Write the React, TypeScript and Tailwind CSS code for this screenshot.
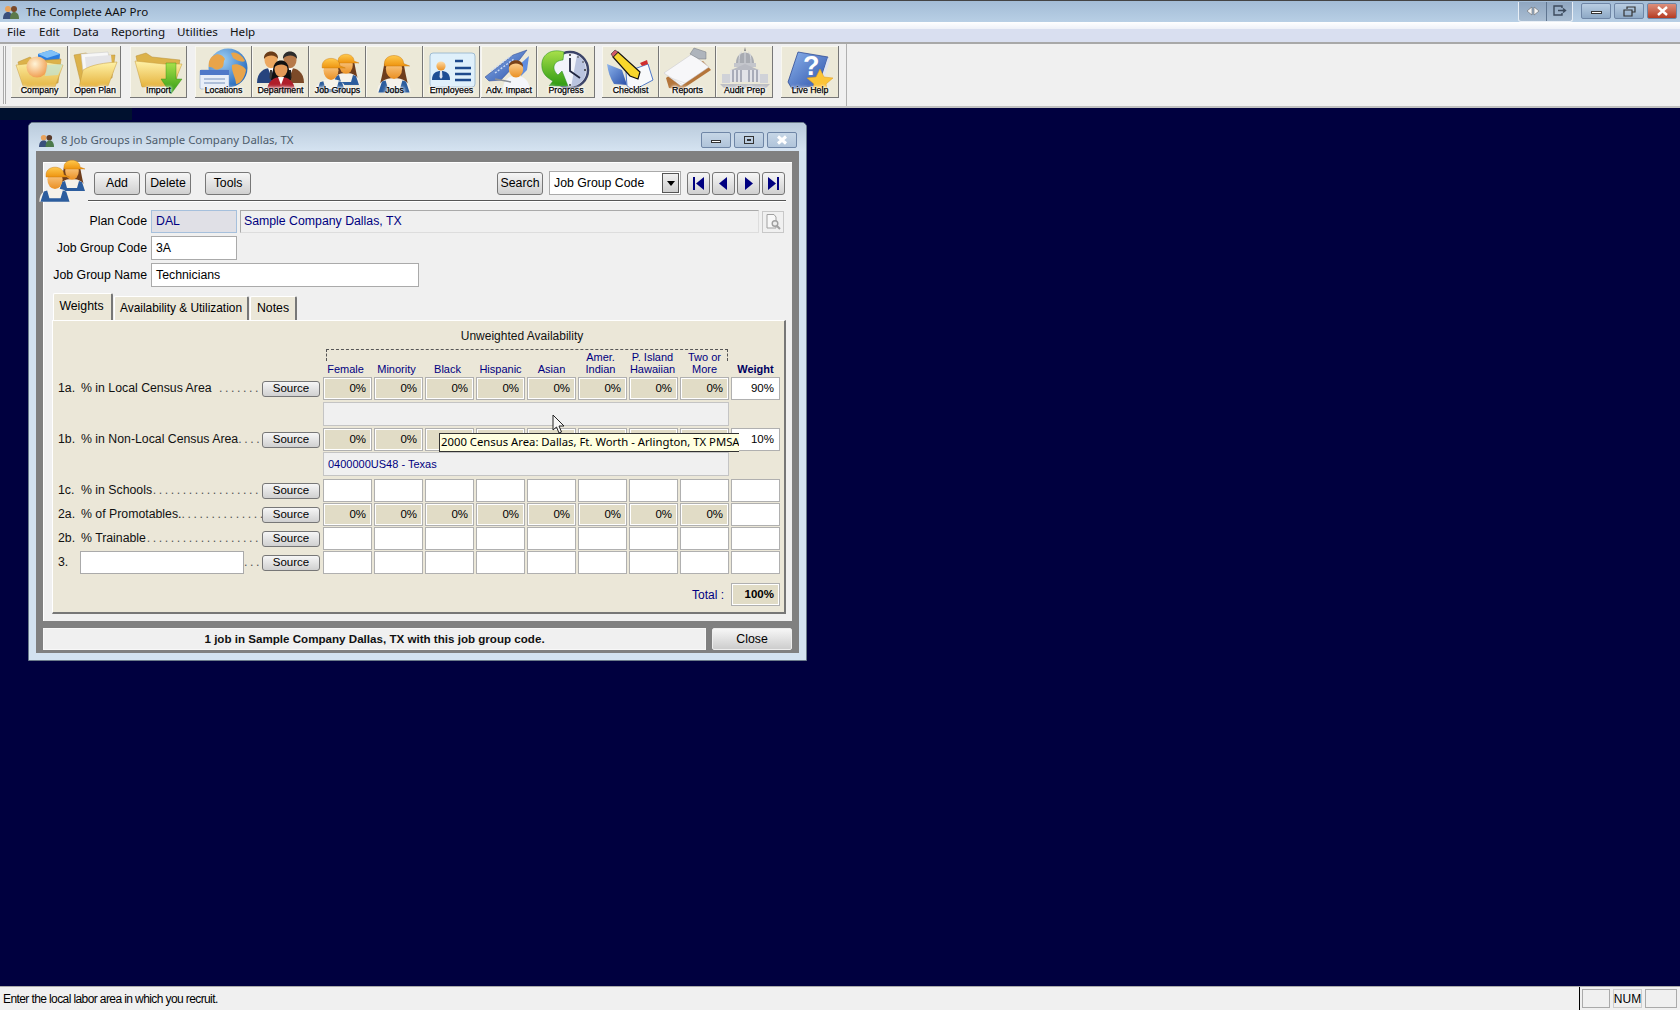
import { FC, ReactNode } from 'react';

const Defs: FC = () => (
    <svg className="absolute h-0 w-0">
        <defs>
            <linearGradient id="fold" x1="0" y1="0" x2="0" y2="1">
                <stop offset="0" stopColor="#fff2a8" />
                <stop offset="1" stopColor="#e5b23c" />
            </linearGradient>
            <linearGradient id="skin" x1="0" y1="0" x2="0" y2="1">
                <stop offset="0" stopColor="#ffdca6" />
                <stop offset="1" stopColor="#ea8f22" />
            </linearGradient>
            <linearGradient id="hat" x1="0" y1="0" x2="0" y2="1">
                <stop offset="0" stopColor="#ffc94d" />
                <stop offset="1" stopColor="#ee9410" />
            </linearGradient>
            <radialGradient id="globe" cx="0.35" cy="0.3" r="0.8">
                <stop offset="0" stopColor="#9fd0f5" />
                <stop offset="1" stopColor="#1d62b8" />
            </radialGradient>
            <linearGradient id="blue" x1="0" y1="0" x2="1" y2="1">
                <stop offset="0" stopColor="#8db4ec" />
                <stop offset="1" stopColor="#2a4fa8" />
            </linearGradient>
            <linearGradient id="green" x1="0" y1="0" x2="0" y2="1">
                <stop offset="0" stopColor="#a8e04a" />
                <stop offset="1" stopColor="#2e9a12" />
            </linearGradient>
            <radialGradient id="sphere" cx="0.4" cy="0.35" r="0.7">
                <stop offset="0" stopColor="#fff4d8" />
                <stop offset="1" stopColor="#f09a4a" />
            </radialGradient>
        </defs>
    </svg>
);

const Worker: FC<{ x: number; y: number; s?: number; hair?: boolean }> = ({ x, y, s = 1, hair }) => (
    <g transform={`translate(${x} ${y}) scale(${s})`}>
        {hair && <path d="M-8 -2 C-10 8 -11 14 -13 19 L13 19 C11 14 10 8 8 -2Z" fill="#6e3d1c" />}
        <path d="M-14 22 C-14 13 -7 10 0 10 C7 10 14 13 14 22Z" fill="#f6f2ea" />
        <path d="M-13 22 L-10 13 L-7 12 L-5 19 L5 19 L7 12 L10 13 L13 22Z" fill="#2c5d9e" />
        <ellipse cx="0" cy="2" rx="6.8" ry="8.8" fill="url(#skin)" />
        <path d="M-8 -2 C-8 -11 8 -11 8 -2 L13 0 L-8 0Z" fill="url(#hat)" stroke="#c9780c" strokeWidth="0.4" />
    </g>
);

const Suit: FC<{ x: number; y: number; skin: string; hair: string; coat: string; tie?: string; long?: boolean }> = ({ x, y, skin, hair, coat, tie, long }) => (
    <g transform={`translate(${x} ${y})`}>
        {long && <path d="M-7 -3 C-9 6 -9 9 -10 12 L10 12 C9 9 9 6 7 -3Z" fill={hair} />}
        <path d="M-14 24 C-14 13 -7 9 0 9 C7 9 14 13 14 24Z" fill={coat} />
        <path d="M-3 9 L0 17 L3 9Z" fill="#fff" />
        {tie && <path d="M-1 11 L1 11 L1.5 19 L0 21 L-1.5 19Z" fill={tie} />}
        <ellipse cx="0" cy="1" rx="6.5" ry="8.2" fill={skin} />
        <path d="M-7 0 C-8 -10 8 -10 7 0 C5 -4 -3 -5 -7 0Z" fill={hair} />
    </g>
);

const FolderBack: FC = () => (
    <path d="M7 16 L19 11 L24 15 L50 13 L47 37 L13 42Z" fill="#dcb24a" stroke="#b98f35" strokeWidth="0.5" />
);

const icons: Record<string, ReactNode> = {
    Company: (
        <>
            <path d="M27 8 L40 4 L49 8 L48 21 L36 25 L27 20Z" fill="#2a7de0" />
            <path d="M27 8 L36 12 L49 8 L40 4Z" fill="#7fc0f8" />
            <FolderBack />
            <path d="M5 19 L34 16 L52 19 L44 41 L13 43Z" fill="url(#fold)" opacity="0.93" stroke="#c79b3a" strokeWidth="0.5" />
            <circle cx="26" cy="21" r="10.5" fill="url(#sphere)" />
            <path d="M36 19 L52 18 L47 29 L34 30Z" fill="#bfe3d6" opacity="0.7" />
        </>
    ),
    'Open Plan': (
        <>
            <path d="M5 9 L17 7 L22 10 L46 9 L43 32 L12 38Z" fill="#dcb24a" stroke="#b98f35" strokeWidth="0.5" />
            <path d="M12 8 L39 6 L43 30 L15 34Z" fill="#f7f7f7" stroke="#c5c5c5" strokeWidth="0.5" />
            <path d="M16 11 L42 9 L44 28 L18 32Z" fill="#e4e4e8" />
            <path d="M14 24 C24 18 36 17 48 16 L39 40 L10 41Z" fill="url(#fold)" stroke="#c79b3a" strokeWidth="0.5" />
        </>
    ),
    Import: (
        <>
            <path d="M6 10 L16 7 L22 11 L50 14 L46 36 L12 40Z" fill="#dcb24a" stroke="#b98f35" strokeWidth="0.5" />
            <path d="M5 15 L34 18 L52 18 L43 40 L12 41Z" fill="url(#fold)" stroke="#c79b3a" strokeWidth="0.5" />
            <path d="M36 17 L46 17 L46 33 L52 33 L41 48 L31 33 L36 33Z" fill="url(#green)" stroke="#2a8a10" strokeWidth="0.4" />
        </>
    ),
    Locations: (
        <>
            <circle cx="33" cy="22" r="19.5" fill="url(#globe)" />
            <path d="M18 10 C24 6 28 10 30 13 C27 17 31 21 24 23 C20 26 19 20 14 21 C13 16 15 12 18 10Z" fill="#e8a44a" />
            <path d="M36 7 C41 5 47 9 50 15 C47 17 41 14 38 12Z" fill="#e8a44a" />
            <path d="M37 19 C42 17 49 20 51 24 C50 32 45 38 41 38 C41 32 36 25 37 19Z" fill="#e8a44a" />
            <rect x="5" y="24" width="29" height="19" rx="1.5" fill="#e8eef8" stroke="#7e98c8" strokeWidth="0.5" />
            <rect x="5" y="24" width="29" height="5" fill="#4f78c8" />
            <path d="M9 33 H30 M9 37 H30" stroke="#9ab0d0" strokeWidth="1.5" />
        </>
    ),
    Department: (
        <>
            <Suit x={19} y={13} skin="#eda860" hair="#6a3c18" coat="#26447e" tie="#3a3a3a" />
            <Suit x={38} y={13} skin="#b77a4a" hair="#2c2c2c" coat="#7c4a28" tie="#222" />
            <Suit x={29} y={22} skin="#e49a58" hair="#111" coat="#b01e2a" long />
        </>
    ),
    'Job Groups': (
        <>
            <Worker x={37} y={17} hair />
            <Worker x={22} y={22} s={1.1} />
        </>
    ),
    Jobs: <Worker x={28} y={20} s={1.2} hair />,
    Employees: (
        <>
            <rect x="7" y="7" width="45" height="34" rx="3" fill="#dff0fb" stroke="#8fb0cc" strokeWidth="0.8" />
            <circle cx="18" cy="20" r="4.6" fill="url(#skin)" />
            <path d="M9 34 C9 27 13 25 18 25 C23 25 27 27 27 34Z" fill="#1e4e94" />
            <path d="M17 25 L19 25 L19.5 31 L18 33 L16.5 31Z" fill="#dfe6f0" />
            <path d="M32 15 H40 M32 22 H48 M32 28 H48 M32 34 H48" stroke="#1e4a8c" strokeWidth="2.6" />
        </>
    ),
    'Adv. Impact': (
        <>
            <path d="M4 31 L32 9 L46 4 L36 17 L20 34 L8 35Z" fill="url(#blue)" stroke="#2a4690" strokeWidth="0.5" />
            <path d="M10 25 L30 10 M14 27 L33 13" stroke="#c8d8f4" strokeWidth="1.4" strokeDasharray="2 1.5" />
            <path d="M37 20 L48 10 L46 24 L40 30Z" fill="#5f8de0" />
            <path d="M22 44 C22 33 28 30 35 30 C42 30 48 33 49 44Z" fill="#f4f6fa" />
            <ellipse cx="35" cy="23" rx="7.2" ry="8.6" fill="url(#skin)" />
            <path d="M28 21 C27 12 43 12 42 21 C39 17 32 16 28 21Z" fill="#7a4218" />
            <path d="M14 33 L30 36" stroke="#8a8f98" strokeWidth="1.5" />
        </>
    ),
    Progress: (
        <>
            <circle cx="33" cy="24" r="18" fill="#f2f4fa" stroke="#3c4468" strokeWidth="2.5" />
            <path d="M40 9 A17 17 0 0 1 40 39 A17 17 0 0 1 34 41Z" fill="#8c9cc8" opacity="0.55" />
            <path d="M33 12 L33 25 L43 32" fill="none" stroke="#20263f" strokeWidth="1.8" />
            <g fill="#333">
                <circle cx="33" cy="9" r="1" />
                <circle cx="48" cy="24" r="1" />
                <circle cx="33" cy="39" r="1" />
                <circle cx="41" cy="11" r="0.8" />
                <circle cx="46" cy="16" r="0.8" />
            </g>
            <path d="M27 6 C15 2 3 8 5 22 C6 29 12 33 16 35 L12 40 L31 40 L25 25 L21 29 C15 24 15 15 26 14Z" fill="url(#green)" stroke="#1e8a20" strokeWidth="0.5" />
        </>
    ),
    Checklist: (
        <>
            <path d="M5 18 L20 24 L25 39 L12 38 C8 32 6 25 5 18Z" fill="url(#blue)" />
            <path d="M24 26 L46 18 L51 34 L32 44 L25 40Z" fill="#f8f9fb" stroke="#4f78c8" strokeWidth="1" />
            <path d="M38 17 L45 14 L46 18 L40 20Z" fill="#d02c2c" />
            <path d="M11 11 L16 6 L38 26 L36 33 L28 30Z" fill="#f8d72c" stroke="#111" strokeWidth="1.2" />
            <path d="M11 11 L16 6 L13 4 L9 8Z" fill="#d05a68" stroke="#333" strokeWidth="0.6" />
        </>
    ),
    Reports: (
        <>
            <path d="M7 32 L16 25 L44 15 L52 24 L22 44 L10 42Z" fill="#b4753a" />
            <path d="M5 27 L33 8 L50 21 L22 40Z" fill="#f7f7f9" stroke="#c4c4cc" strokeWidth="0.5" />
            <path d="M8 29 L24 39 M12 32 L26 37" stroke="#ddd" strokeWidth="0.7" />
            <path d="M31 8 L35 2 L47 6 L47 13 L40 13Z" fill="#aeb4bc" stroke="#70767e" strokeWidth="0.5" />
        </>
    ),
    'Audit Prep': (
        <>
            <path d="M29 1 L30 5 L28 5Z" fill="#888" />
            <path d="M20 17 C20 3 38 3 38 17Z" fill="#a8abb2" />
            <path d="M23 17 C23 7 25 6 26 6 M29 17 V5 M35 17 C35 7 33 6 32 6" stroke="#d8dadf" strokeWidth="1" fill="none" />
            <rect x="18" y="17" width="22" height="4" fill="#c4c6cc" />
            <path d="M15 24 L29 18 L43 24Z" fill="#b8bac2" />
            <rect x="14" y="24" width="30" height="12" fill="#e2e3e8" />
            <path d="M17 24 V36 M21 24 V36 M25 24 V36 M33 24 V36 M37 24 V36 M41 24 V36" stroke="#8a90a0" strokeWidth="1.3" />
            <rect x="6" y="28" width="8" height="9" fill="#d0d2d8" />
            <rect x="44" y="28" width="8" height="9" fill="#d0d2d8" />
            <path d="M4 38 H54 L50 42 H8Z" fill="#bcbec4" />
        </>
    ),
    'Live Help': (
        <>
            <path d="M7 36 L17 6 L47 11 L38 39 L11 43Z" fill="url(#blue)" stroke="#223f8c" strokeWidth="0.7" />
            <path d="M47 11 L49 14 L40 41 L38 39Z" fill="#dfe4f0" />
            <text x="22" y="29" fontSize="27" fontWeight="700" fill="#fff" fontFamily="Liberation Sans, sans-serif">?</text>
            <path d="M39 23 L43 31 L52 32 L45 38 L47 47 L39 42 L31 47 L33 38 L26 32 L35 31Z" fill="#fbc437" stroke="#e09a18" strokeWidth="0.5" />
        </>
    ),
};

const toolbar = [
    { label: 'Company', w: 'w-[57px]', ml: '' },
    { label: 'Open Plan', w: 'w-[52px]', ml: 'ml-px' },
    { label: 'Import', w: 'w-[57px]', ml: 'ml-[9px]' },
    { label: 'Locations', w: 'w-[57px]', ml: 'ml-[8px]' },
    { label: 'Department', w: 'w-[57px]', ml: '' },
    { label: 'Job Groups', w: 'w-[57px]', ml: '' },
    { label: 'Jobs', w: 'w-[57px]', ml: '' },
    { label: 'Employees', w: 'w-[57px]', ml: '' },
    { label: 'Adv. Impact', w: 'w-[56px]', ml: 'ml-px' },
    { label: 'Progress', w: 'w-[58px]', ml: '' },
    { label: 'Checklist', w: 'w-[57px]', ml: 'ml-[7px]' },
    { label: 'Reports', w: 'w-[57px]', ml: '' },
    { label: 'Audit Prep', w: 'w-[57px]', ml: '' },
    { label: 'Live Help', w: 'w-[58px]', ml: 'ml-[8px]' },
];

const ToolButton: FC<{ label: string; w: string; ml: string }> = ({ label, w, ml }) => (
    <div className={`${w} ${ml} relative h-[52px] overflow-hidden border-r border-b border-[#777] bg-[#ece9d8] shadow-[inset_1px_1px_0_#f8f7f0]`}>
        <svg viewBox="0 0 58 51" className="absolute top-0 left-0 h-[51px] w-[58px]">
            {icons[label]}
        </svg>
        <div className="absolute right-0 bottom-[1px] left-0 pl-px text-center text-[8.8px] leading-[11px] whitespace-nowrap text-black [-webkit-text-stroke:0.25px_#000] [text-shadow:0_0_2px_#fff,0_0_3px_#fff,0_0_3px_#fff,0_0_4px_#fff,0_0_4px_#fff]">
            {label}
        </div>
    </div>
);

const CaptionBtn: FC<{ className: string; children: ReactNode }> = ({ className, children }) => (
    <div className={`flex h-[16px] items-center justify-center rounded-[2px] border border-[#6f86a6] ${className}`}>{children}</div>
);

const Btn: FC<{ className: string; children: ReactNode }> = ({ className, children }) => (
    <div className={`flex items-center justify-center rounded-[3px] border border-[#777] bg-gradient-to-b from-[#f6f6f6] to-[#d0d0d0] text-black ${className}`}>
        {children}
    </div>
);

const Cell: FC<{ value?: string; tan?: boolean; bold?: boolean }> = ({ value, tan, bold }) => (
    <div
        className={`flex h-full w-[49px] items-center justify-end border border-[#b0b0b0] pr-[5px] text-[11.5px] text-black ${
            tan ? 'bg-[#e1dcc6] shadow-[inset_0_0_0_1px_#fff]' : 'bg-white'
        } ${bold ? 'font-bold' : ''}`}
    >
        {value}
    </div>
);

const heads = [
    { lines: ['Female'], pr: 'pr-[4px]' },
    { lines: ['Minority'], pr: 'pr-[4px]' },
    { lines: ['Black'], pr: 'pr-[4px]' },
    { lines: ['Hispanic'], pr: '' },
    { lines: ['Asian'], pr: '' },
    { lines: ['Amer.', 'Indian'], pr: 'pr-[4px]' },
    { lines: ['P. Island', 'Hawaiian'], pr: 'pr-[2px]' },
    { lines: ['Two or', 'More'], pr: '' },
];

type RowProps = {
    no: string;
    name?: string;
    dots: string;
    cells: 'tan' | 'blank';
    weight?: string;
    mt: string;
};

const Row: FC<RowProps> = ({ no, name, dots, cells, weight, mt }) => (
    <div className={`flex h-[23px] items-center ${mt}`}>
        <div className="flex w-[204px] items-center whitespace-nowrap text-[#111]">
            <span className="w-[23px] shrink-0">{no}</span>
            {name ? <span>{name}</span> : <div className="ml-[-1px] h-[23px] w-[164px] shrink-0 border border-[#aaa] bg-white" />}
            <span className="flex-1 overflow-hidden pr-px text-right tracking-[2.6px] text-[#555]">{dots}</span>
        </div>
        <Btn className="h-[16px] w-[58px] text-[11.5px]">Source</Btn>
        <div className="ml-[3px] flex h-full gap-[2px]">
            {Array.from({ length: 8 }).map((_, i) => (
                <Cell key={i} tan={cells === 'tan'} value={cells === 'tan' ? '0%' : undefined} />
            ))}
            {weight === undefined ? <Cell /> : <Cell value={weight} />}
        </div>
    </div>
);

const Bar: FC<{ text?: string; mt: string }> = ({ text, mt }) => (
    <div className={`ml-[265px] flex h-[24px] w-[406px] items-center border border-[#c4c4c4] bg-[#f0f0f0] pl-[4px] text-[11px] text-[#000080] ${mt}`}>
        {text}
    </div>
);

const NavBtn: FC<{ d: string }> = ({ d }) => (
    <Btn className="h-[23px] w-[23px]">
        <svg width="15" height="15" viewBox="0 0 15 15" fill="#000080">
            <path d={d} />
        </svg>
    </Btn>
);

const App: FC = () => {
    return (
        <div className="relative flex h-[1010px] w-[1680px] flex-col overflow-hidden bg-[#00003f] font-['Liberation_Sans',sans-serif] text-[12.3px] text-black">
            <Defs />

            {/* title bar */}
            <div className="flex h-[22px] items-center border-t border-[#444] bg-gradient-to-b from-[#a3bcd6] to-[#b8cfe5] pr-[3px] font-['Noto_Sans',sans-serif] text-[11.6px]">
                <svg viewBox="0 0 18 16" className="ml-[2px] h-[16px] w-[18px]">
                    <circle cx="6" cy="5" r="3" fill="#e9a35c" />
                    <circle cx="12" cy="5" r="3" fill="#7a4a2a" />
                    <path d="M1 15 C1 9 4 8 6 8 C9 8 10 10 10 15Z" fill="#3a4f7c" />
                    <path d="M8 15 C8 10 10 8 12 8 C15 8 17 10 17 15Z" fill="#5c7a4c" />
                </svg>
                <span className="ml-[6px] text-[#111]">The Complete AAP Pro</span>
                <div className="ml-auto mr-[8px] flex h-[20px] w-[55px] rounded-b-[3px] border-x border-b border-[#e8eef5] bg-gradient-to-b from-[#8fa6c0] to-[#a9bdd2]">
                    <div className="flex w-[28px] items-center justify-center border-r border-[#5f7590]">
                        <svg width="14" height="10" viewBox="0 0 14 10" fill="#f4f4f4" stroke="#555" strokeWidth="0.5">
                            <path d="M6 1 L1 5 L6 9Z M8 1 L13 5 L8 9Z" />
                        </svg>
                    </div>
                    <div className="flex flex-1 items-center justify-center">
                        <svg width="14" height="12" viewBox="0 0 14 12" fill="none" stroke="#3c4a5c" strokeWidth="1.4">
                            <path d="M9 3 V1 H1 V10 H9 V8 M5 5.5 H12 M10 3.5 L12.5 5.5 L10 7.5" />
                        </svg>
                    </div>
                </div>
                <div className="flex gap-[3px] self-start pt-[2px]">
                    <CaptionBtn className="w-[30px] bg-gradient-to-b from-[#b9cde2] to-[#8ea9c6]">
                        <div className="mt-[3px] h-[3px] w-[11px] border border-[#333] bg-white" />
                    </CaptionBtn>
                    <CaptionBtn className="w-[30px] bg-gradient-to-b from-[#b9cde2] to-[#8ea9c6]">
                        <svg width="13" height="11" viewBox="0 0 13 11" fill="none" stroke="#333" strokeWidth="1.2">
                            <path d="M4 3 V1 H12 V6 H9 M1 4 H9 V10 H1Z" />
                        </svg>
                    </CaptionBtn>
                    <CaptionBtn className="w-[30px] border-[#5a2018] bg-gradient-to-b from-[#dc8f7c] to-[#b53a20]">
                        <svg width="13" height="10" viewBox="0 0 13 10" stroke="#fff" strokeWidth="2.4">
                            <path d="M2 1 L11 9 M11 1 L2 9" />
                        </svg>
                    </CaptionBtn>
                </div>
            </div>

            {/* menu bar */}
            <div className="h-[7px] bg-gradient-to-b from-white to-[#eef1f8]" />
            <div className="flex h-[13px] bg-[#d9dff0] font-['Noto_Sans',sans-serif] text-[11.6px]">
                <div className="relative flex w-full text-[#111]">
                    <div className="absolute top-[-6px] flex leading-[18px]">
                        <span className="ml-[7px] w-[32px]">File</span>
                        <span className="w-[34px]">Edit</span>
                        <span className="w-[38px]">Data</span>
                        <span className="w-[66px]">Reporting</span>
                        <span className="w-[53px]">Utilities</span>
                        <span>Help</span>
                    </div>
                </div>
            </div>
            <div className="h-[2px] bg-[#a8a8a8]" />

            {/* toolbar */}
            <div className="flex h-[64px] border-b-2 border-[#c0c0c0] bg-[#f0f0f0]">
                <div className="flex w-[847px] border-r border-[#b0b0b0] pt-[2px]">
                    <div className="ml-[3px] mr-[5px] h-[58px] w-[3px] border-x border-[#aaa] bg-[#f6f6f6]" />
                    {toolbar.map((t) => (
                        <ToolButton key={t.label} {...t} />
                    ))}
                </div>
            </div>

            {/* workspace */}
            <div className="relative flex-1">
                <div className="absolute top-0 left-0 h-[12px] w-[132px] bg-[#00112f]" />

                {/* job groups window */}
                <div className="absolute top-[14px] left-[28px] flex h-[539px] w-[779px] flex-col rounded-t-[5px] border border-[#6a7a8a] bg-[#d3e2f0]">
                    <div className="flex h-[28px] items-center rounded-t-[5px] bg-gradient-to-b from-[#bacbdc] to-[#d5e3f1] pl-[9px] pt-[6px] font-['Noto_Sans',sans-serif] text-[11.4px] text-[#4c5b6b]">
                        <svg viewBox="0 0 18 16" className="h-[15px] w-[17px]">
                            <circle cx="6" cy="5" r="3" fill="#e9a35c" />
                            <circle cx="12" cy="5" r="3" fill="#5a3a2a" />
                            <path d="M1 15 C1 9 4 8 6 8 C9 8 10 10 10 15Z" fill="#3a4f7c" />
                            <path d="M8 15 C8 10 10 8 12 8 C15 8 17 10 17 15Z" fill="#4c7a4c" />
                        </svg>
                        <span className="ml-[6px]">8 Job Groups in Sample Company Dallas, TX</span>
                        <div className="ml-auto mr-[9px] flex gap-[3px]">
                            <CaptionBtn className="w-[30px] bg-gradient-to-b from-[#c6d6e6] to-[#b0c4da]">
                                <div className="mt-[3px] h-[3px] w-[10px] border border-[#333] bg-white" />
                            </CaptionBtn>
                            <CaptionBtn className="w-[30px] bg-gradient-to-b from-[#c6d6e6] to-[#b0c4da]">
                                <div className="flex h-[8px] w-[10px] items-center justify-center border border-[#333]">
                                    <div className="h-[2px] w-[4px] border border-[#333]" />
                                </div>
                            </CaptionBtn>
                            <CaptionBtn className="w-[30px] bg-gradient-to-b from-[#c6d6e6] to-[#b0c4da]">
                                <svg width="12" height="10" viewBox="0 0 12 10" stroke="#fff" strokeWidth="3">
                                    <path d="M2 1.5 L10 8.5 M10 1.5 L2 8.5" />
                                </svg>
                            </CaptionBtn>
                        </div>
                    </div>

                    <div className="relative mx-[7px] flex h-[502px] flex-col bg-[#808080] px-[7px] pt-[11px]">
                        {/* big window icon, hangs over the frame */}
                        <svg viewBox="0 0 48 50" className="absolute top-[1px] left-[2px] z-10 h-[50px] w-[48px]">
                            <Worker x={34} y={17} hair />
                            <Worker x={17} y={25} s={1.12} />
                        </svg>

                        <div className="relative flex h-[459px] w-[749px] flex-col border-t border-l border-white bg-[#f0f0f0]">
                            <div className="mt-[8px] flex h-[24px] items-center pl-[50px]">
                                <Btn className="h-[23px] w-[46px]">Add</Btn>
                                <Btn className="ml-[5px] h-[23px] w-[46px]">Delete</Btn>
                                <Btn className="ml-[14px] h-[23px] w-[46px]">Tools</Btn>
                                <Btn className="ml-[246px] h-[23px] w-[46px]">Search</Btn>
                                <div className="ml-[6px] flex h-[24px] w-[132px] items-center justify-between border border-[#aaa] bg-white pl-[4px] pr-px">
                                    <span>Job Group Code</span>
                                    <div className="flex h-[20px] w-[17px] items-center justify-center border border-[#555] bg-gradient-to-b from-[#f0f0f0] to-[#cfcfcf]">
                                        <svg width="8" height="5" viewBox="0 0 8 5" fill="#000">
                                            <path d="M0 0 H8 L4 5Z" />
                                        </svg>
                                    </div>
                                </div>
                                <div className="ml-[6px] flex gap-[2px]">
                                    <NavBtn d="M2 1 H4 V14 H2Z M13 1 V14 L5 7.5Z" />
                                    <NavBtn d="M11 1 V14 L3 7.5Z" />
                                    <NavBtn d="M4 1 V14 L12 7.5Z" />
                                    <NavBtn d="M2 1 V14 L10 7.5Z M11 1 H13 V14 H11Z" />
                                </div>
                            </div>
                            <div className="ml-[44px] mr-[6px] mt-[5px] h-[2px] border-t border-[#555] bg-white" />

                            {/* plan fields */}
                            <div className="mt-[8px] flex h-[23px] items-center">
                                <div className="w-[103px] text-right">Plan Code</div>
                                <div className="ml-[4px] flex h-[23px] w-[86px] items-center border border-[#a6c0dc] bg-[#e0e0e6] pl-[4px] text-[#000080]">DAL</div>
                                <div className="ml-[3px] flex h-[23px] w-[519px] items-center border border-[#aaa] border-r-[#ddd] border-b-[#ddd] bg-[#f0f0f0] pl-[3px] text-[#000080]">
                                    Sample Company Dallas, TX
                                </div>
                                <div className="ml-[3px] flex h-[22px] w-[22px] items-center justify-center border border-[#c8c8c8]">
                                    <svg width="18" height="18" viewBox="0 0 18 18" fill="none" stroke="#a0a0a0" strokeWidth="1">
                                        <path d="M3 1.5 H10 L12 4 V15 H3Z" fill="#f8f8f8" />
                                        <circle cx="11" cy="10.5" r="2.8" strokeWidth="1.4" fill="#eee" />
                                        <path d="M13 13 L16 16" strokeWidth="2" />
                                    </svg>
                                </div>
                            </div>
                            <div className="mt-[3px] flex h-[24px] items-center">
                                <div className="w-[103px] text-right">Job Group Code</div>
                                <div className="ml-[4px] flex h-[24px] w-[86px] items-center border border-[#aaa] bg-white pl-[4px]">3A</div>
                            </div>
                            <div className="mt-[3px] flex h-[24px] items-center">
                                <div className="w-[103px] text-right">Job Group Name</div>
                                <div className="ml-[4px] flex h-[24px] w-[268px] items-center border border-[#aaa] bg-white pl-[4px]">Technicians</div>
                            </div>

                            {/* tabs */}
                            <div className="ml-[9px] mt-[6px] flex h-[27px] items-end">
                                <div className="z-10 flex h-[27px] w-[60px] items-center justify-center rounded-t-[2px] border-t border-l border-r-2 border-white border-r-[#777] bg-[#ebe7d8] pb-[2px] pr-[2px]">
                                    Weights
                                </div>
                                <div className="ml-px flex h-[24px] w-[135px] items-center justify-center rounded-t-[2px] border-t border-l border-r-2 border-white border-r-[#777] bg-[#ebe7d8] text-[11.9px]">
                                    Availability &amp; Utilization
                                </div>
                                <div className="ml-px flex h-[24px] w-[47px] items-center justify-center rounded-t-[2px] border-t border-l border-r-2 border-white border-r-[#777] bg-[#ebe7d8]">
                                    Notes
                                </div>
                            </div>

                            {/* weights panel */}
                            <div className="relative ml-[8px] h-[294px] w-[734px] border-t border-l border-r-2 border-b-2 border-t-white border-l-white border-r-[#777] border-b-[#777] bg-[#ebe7d8] pl-[5px]">
                                <div className="h-[56px]">
                                    <div className="ml-[261px] w-[406px] pt-[8px] text-center text-[12px] leading-[15px] text-[#111]">Unweighted Availability</div>
                                    <div className="ml-[268px] mt-[5px] h-[12px] w-[402px] border-t border-r border-l border-dashed border-[#555]" />
                                    <div className="ml-[265px] mt-[-11px] flex h-[25px] gap-[2px] text-[11px] leading-[12px] text-[#000080]">
                                        {heads.map((h) => (
                                            <div key={h.lines[0]} className={`flex w-[49px] flex-col items-center justify-end text-center whitespace-nowrap ${h.pr}`}>
                                                {h.lines.map((l) => (
                                                    <span key={l}>{l}</span>
                                                ))}
                                            </div>
                                        ))}
                                        <div className="flex w-[49px] items-end justify-center font-bold text-[#000060]">Weight</div>
                                    </div>
                                </div>

                                <Row no="1a." name="% in Local Census Area" dots="......." cells="tan" weight="90%" mt="mt-0" />
                                <Bar mt="mt-[2px]" />
                                <Row no="1b." name="% in Non-Local Census Area" dots="...." cells="tan" weight="10%" mt="mt-[2px]" />
                                <Bar mt="mt-px" text="0400000US48 - Texas" />
                                <Row no="1c." name="% in Schools" dots=".................." cells="blank" mt="mt-[3px]" />
                                <Row no="2a." name="% of Promotables." dots=".............." cells="tan" mt="mt-px" />
                                <Row no="2b." name="% Trainable" dots="..................." cells="blank" mt="mt-px" />
                                <Row no="3." dots="..." cells="blank" mt="mt-px" />

                                <div className="mt-[9px] flex h-[23px] items-center justify-end pr-[4px]">
                                    <span className="mr-[7px] text-[12px] text-[#000080]">Total :</span>
                                    <Cell value="100%" tan bold />
                                </div>

                                {/* tooltip + pointer sit on top of the rows */}
                                <div className="absolute top-[112px] left-[386px] z-10 flex h-[19px] w-[300px] items-center overflow-hidden border-y border-l border-[#333] bg-[#ffffe1] pl-px font-['Noto_Sans',sans-serif] text-[11.3px] whitespace-nowrap text-black">
                                    2000 Census Area: Dallas, Ft. Worth - Arlington, TX PMSA
                                </div>
                                <svg viewBox="0 0 13 20" className="absolute top-[93px] left-[499px] z-20 h-[20px] w-[13px]">
                                    <path d="M1 1 V16 L4.5 13 L7 19 L9.5 18 L7 12 H12Z" fill="#f6f6f6" stroke="#222" strokeWidth="1" />
                                </svg>
                            </div>
                        </div>

                        {/* bottom strip of the window */}
                        <div className="mt-[7px] flex h-[22px]">
                            <div className="flex h-[22px] w-[664px] items-center justify-center border border-[#f8f8f8] bg-[#f0f0f0] text-[11.6px] font-bold text-[#111]">
                                1 job in Sample Company Dallas, TX with this job group code.
                            </div>
                            <div className="ml-[6px] flex h-[22px] w-[80px] items-center justify-center rounded-[2px] border border-[#eee] bg-gradient-to-b from-[#f6f6f6] to-[#cdcdcd]">
                                Close
                            </div>
                        </div>
                    </div>
                </div>
            </div>

            {/* status bar */}
            <div className="flex h-[24px] items-center border-t border-[#aaa] bg-[#f0f0f0] text-[12px]">
                <span className="ml-[3px] tracking-[-0.6px]">Enter the local labor area in which you recruit.</span>
                <div className="ml-auto flex h-full items-center">
                    <div className="h-full w-px bg-black" />
                    <div className="ml-[2px] h-[19px] w-[28px] border border-[#aaa]" />
                    <div className="ml-[3px] flex h-[19px] w-[29px] items-center justify-center border border-[#ccc]">NUM</div>
                    <div className="ml-[3px] mr-[3px] h-[19px] w-[32px] border border-[#aaa]" />
                </div>
            </div>
        </div>
    );
};

export default App;
